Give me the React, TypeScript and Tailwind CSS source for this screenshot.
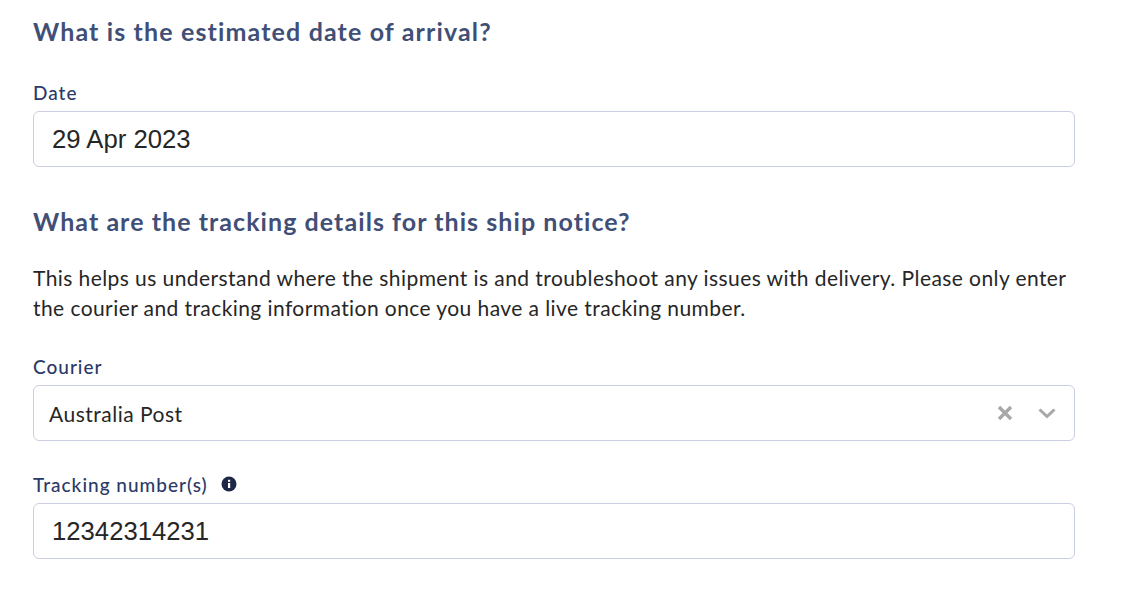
import React from "react";

const sans = "font-['Lato',sans-serif]";

function Label({ children }: { children: React.ReactNode }) {
  return <div className={`${sans} h-[22px] text-[19px] leading-[22px] font-medium tracking-[1px] text-[#2b3a67]`}>{children}</div>;
}

function Field({ value }: { value: string }) {
  return (
    <div className="mt-[7px] flex h-[56px] items-center rounded-[6px] border border-[#c9cee3] bg-white px-[18px] font-['Liberation_Sans',sans-serif] text-[25.7px] text-[#262626]">
      {value}
    </div>
  );
}

export default function App() {
  return (
    <div className={`${sans} h-[598px] w-[1138px] overflow-hidden bg-white pl-[33px] pr-[63px] pt-[15px]`}>
      <h2 className="h-[32px] text-[25px] leading-[32px] font-bold tracking-[1.14px] text-[#414f77]">What is the estimated date of arrival?</h2>
      <div className="mt-[35px]">
        <Label>Date</Label>
        <Field value="29 Apr 2023" />
      </div>
      <h2 className="mt-[38px] h-[32px] text-[25px] leading-[32px] font-bold tracking-[1.06px] text-[#414f77]">What are the tracking details for this ship notice?</h2>
      <p className="mt-[26px] text-[21px] leading-[30px] tracking-[0.42px] text-[#262626]">
        This helps us understand where the shipment is and troubleshoot any issues with delivery. Please only enter the courier and tracking information once you have a live tracking number.
      </p>
      <div className="mt-[33px]">
        <Label>Courier</Label>
        <div className="mt-[7px] flex h-[56px] items-center justify-between rounded-[6px] border border-[#c9cee3] bg-white pl-[15px] pr-[18px] text-[21px] tracking-[0.5px] text-[#262626]">
          <span className="pt-[2px]">Australia Post</span>
          <div className="flex items-center gap-[25px]">
            <svg width="16" height="16" viewBox="0 0 16 16" fill="none" stroke="#a8a8a8" strokeWidth="3.4">
              <path d="M2 2l12 12M14 2L2 14" />
            </svg>
            <svg width="18" height="11" viewBox="0 0 18 11" fill="none" stroke="#a8a8a8" strokeWidth="3">
              <path d="M1.5 1.5L9 8.5l7.5-7" />
            </svg>
          </div>
        </div>
      </div>
      <div className="mt-[33px]">
        <div className="flex items-center gap-[14px]">
          <Label>Tracking number(s)</Label>
          <svg width="16" height="16" viewBox="0 0 16 16" className="-ml-px -translate-y-px">
            <circle cx="8" cy="8" r="7.5" fill="#1f2747" />
            <rect x="7" y="7" width="2.2" height="5" fill="#fff" />
            <rect x="7" y="3.8" width="2.2" height="2" fill="#fff" />
          </svg>
        </div>
        <Field value="12342314231" />
      </div>
    </div>
  );
}
